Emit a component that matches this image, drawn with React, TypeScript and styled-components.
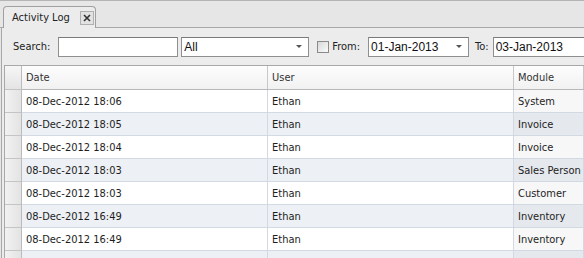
import styled, { createGlobalStyle } from 'styled-components'

const rows = [
  { date: '08-Dec-2012 18:06', user: 'Ethan', module: 'System' },
  { date: '08-Dec-2012 18:05', user: 'Ethan', module: 'Invoice' },
  { date: '08-Dec-2012 18:04', user: 'Ethan', module: 'Invoice' },
  { date: '08-Dec-2012 18:03', user: 'Ethan', module: 'Sales Person' },
  { date: '08-Dec-2012 18:03', user: 'Ethan', module: 'Customer' },
  { date: '08-Dec-2012 16:49', user: 'Ethan', module: 'Inventory' },
  { date: '08-Dec-2012 16:49', user: 'Ethan', module: 'Inventory' },
  { date: '', user: '', module: '' },
]

const GlobalStyle = createGlobalStyle`
  html, body {
    margin: 0;
    padding: 0;
    width: 584px;
    height: 258px;
    overflow: hidden;
    background: #e6e6e6;
  }
  body {
    font-family: "DejaVu Sans Condensed", "DejaVu Sans", sans-serif;
    font-size: 11px;
    color: #1e1e1e;
  }
`

const Frame = styled.div`
  width: 584px;
  height: 258px;
  border-top: 1px solid #b4b4b4;
  box-sizing: border-box;
  padding-top: 5px;
  display: flex;
  flex-direction: column;
  overflow: hidden;
`

const TabStrip = styled.div`
  height: 22px;
  flex-shrink: 0;
  box-sizing: border-box;
  display: flex;
  align-items: flex-end;
  padding-left: 3px;
  border-bottom: 1px solid #a8a8a8;
`

const Tab = styled.div`
  height: 22px;
  width: 93px;
  box-sizing: border-box;
  border: 1px solid #a0a0a0;
  border-bottom: none;
  border-radius: 4px 4px 0 0;
  background: #ececec;
  margin-bottom: -1px;
  display: flex;
  align-items: center;
  padding-left: 8px;
  gap: 10px;
`

const TabLabel = styled.span`
  font-size: 11px;
  color: #222;
`

const CloseBox = styled.span`
  width: 14px;
  height: 14px;
  box-sizing: border-box;
  border: 1px solid #b0b0b0;
  background: #e2e2e2;
  display: flex;
  align-items: center;
  justify-content: center;
`

const Panel = styled.div`
  flex: 1;
  display: flex;
  flex-direction: column;
  background: #ececec;
  border-left: 1px solid #a8a8a8;
  margin-left: 1px;
`

const Toolbar = styled.div`
  height: 37px;
  flex-shrink: 0;
  display: flex;
  align-items: center;
  padding-left: 11px;
`

const Label = styled.span<{ $gap: number }>`
  margin-right: ${(p) => p.$gap}px;
  color: #222;
  flex-shrink: 0;
`

const Field = styled.div<{ $w: number; $mr: number }>`
  width: ${(p) => p.$w}px;
  height: 20px;
  box-sizing: border-box;
  border: 1px solid #8f8f8f;
  border-top-color: #7a7a7a;
  background: #fff;
  margin-right: ${(p) => p.$mr}px;
  display: flex;
  align-items: center;
  padding-left: 2px;
  flex-shrink: 0;
  font-family: "Liberation Sans", Arial, sans-serif;
  font-size: 12px;
  color: #111;
`

const FieldText = styled.span`
  flex: 1;
`

const Caret = styled.span`
  width: 0;
  height: 0;
  border-left: 3px solid transparent;
  border-right: 3px solid transparent;
  border-top: 3px solid #555;
  margin-right: 6px;
`

const Check = styled.span`
  width: 12px;
  height: 12px;
  box-sizing: border-box;
  border: 1px solid #8a8a8a;
  background: linear-gradient(135deg, #d8d8d8, #fbfbfb);
  margin-right: 3px;
  flex-shrink: 0;
`

const Grid = styled.div`
  margin-left: 2px;
  border-left: 1px solid #a8a8a8;
  border-top: 1px solid #a8a8a8;
  background: #fff;
  flex: 1;
`

const Row = styled.div<{ $alt?: boolean; $head?: boolean }>`
  display: grid;
  grid-template-columns: 17px 246px 246px 1fr;
  height: ${(p) => (p.$head ? 24 : 23)}px;
  box-sizing: border-box;
  border-bottom: 1px solid ${(p) => (p.$head ? '#b8b8b8' : '#d3d9e3')};
  background: ${(p) => (p.$head ? 'linear-gradient(#fdfdfd, #f1f1f1)' : p.$alt ? '#edf0f5' : '#fff')};
`

const Corner = styled.div<{ $head?: boolean }>`
  background: ${(p) => (p.$head ? 'linear-gradient(#f6f6f6, #e4e4e4)' : 'linear-gradient(90deg, #f2f2f2, #e3e3e3)')};
  border-right: 1px solid #bcbcbc;
  margin-bottom: -1px;
  border-bottom: 1px solid #c4c4c4;
`

const Cell = styled.div<{ $head?: boolean; $shade?: boolean }>`
  display: flex;
  align-items: center;
  padding-left: 4px;
  border-right: 1px solid ${(p) => (p.$head ? '#c8c8c8' : '#d3d9e3')};
  background: ${(p) => (p.$shade ? 'rgba(0,0,0,0.03)' : 'transparent')};
  white-space: nowrap;
  overflow: hidden;
  color: ${(p) => (p.$head ? '#333' : '#1e1e1e')};
`

export default function App() {
  return (
    <>
      <GlobalStyle />
      <Frame>
        <TabStrip>
          <Tab>
            <TabLabel>Activity Log</TabLabel>
            <CloseBox>
              <svg width="8" height="8" viewBox="0 0 8 8">
                <path d="M1 1L7 7M7 1L1 7" stroke="#333" strokeWidth="1.6" />
              </svg>
            </CloseBox>
          </Tab>
        </TabStrip>
        <Panel>
          <Toolbar>
            <Label $gap={8}>Search:</Label>
            <Field $w={120} $mr={3} />
            <Field $w={128} $mr={8}>
              <FieldText>All</FieldText>
              <Caret />
            </Field>
            <Check />
            <Label $gap={8}>From:</Label>
            <Field $w={101} $mr={6}>
              <FieldText>01-Jan-2013</FieldText>
              <Caret />
            </Field>
            <Label $gap={4}>To:</Label>
            <Field $w={100} $mr={0}>
              <FieldText>03-Jan-2013</FieldText>
            </Field>
          </Toolbar>
          <Grid>
            <Row $head>
              <Corner $head />
              <Cell $head>Date</Cell>
              <Cell $head>User</Cell>
              <Cell $head>Module</Cell>
            </Row>
            {rows.map((r, i) => (
              <Row key={i} $alt={i % 2 === 1}>
                <Corner />
                <Cell>{r.date}</Cell>
                <Cell>{r.user}</Cell>
                <Cell $shade>{r.module}</Cell>
              </Row>
            ))}
          </Grid>
        </Panel>
      </Frame>
    </>
  )
}
